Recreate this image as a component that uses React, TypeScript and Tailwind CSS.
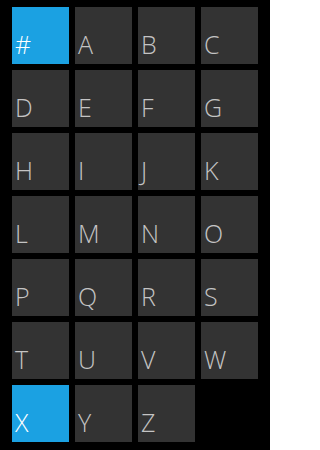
const letters = ["#", "A", "B", "C", "D", "E", "F", "G", "H", "I", "J", "K", "L", "M", "N", "O", "P", "Q", "R", "S", "T", "U", "V", "W", "X", "Y", "Z"];

// tiles that stay highlighted in the jump list
const active = new Set(["#", "X"]);

export default function App() {
    return (
        <div className="w-[270px] h-[450px] bg-black overflow-hidden">
            <div className="grid grid-cols-[repeat(4,57px)] gap-[6px] pl-[12px] pt-[7px]">
                {letters.map((l) => (
                    <div
                        key={l}
                        className={`h-[57px] flex items-end pl-[3px] pb-[7px] ${active.has(l) ? "bg-[#1ba1e2] text-white" : "bg-[#333333] text-[#c4c4c4]"}`}
                    >
                        <span className="text-[25px] leading-none font-light font-['Open_Sans',sans-serif]">{l}</span>
                    </div>
                ))}
            </div>
        </div>
    );
}
